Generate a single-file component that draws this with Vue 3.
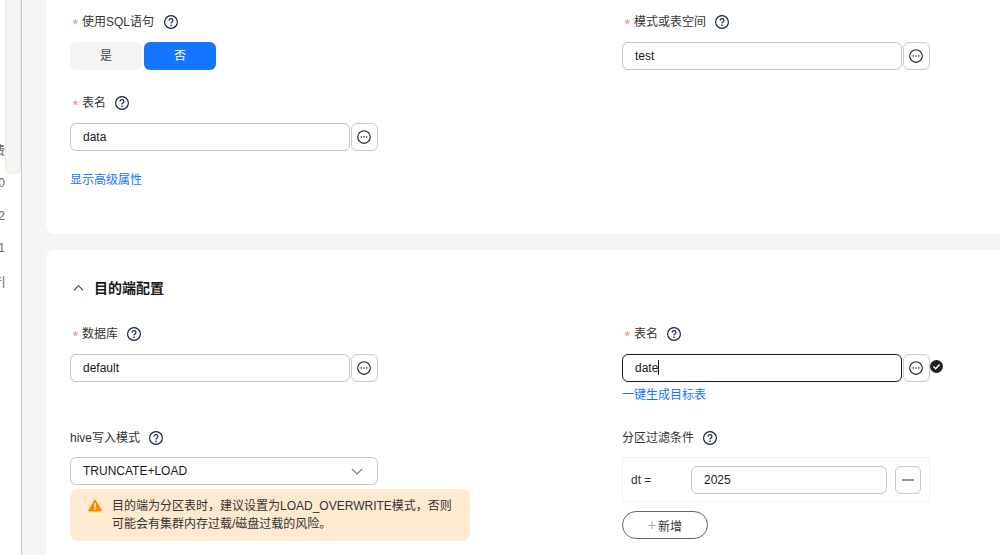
<script setup>
const sideItems = ['费', '20', '22', '21', '件|']
</script>

<template>
  <div class="page">
    <aside class="side">
      <div class="side-texts">
        <div v-for="t in sideItems" :key="t" class="side-item"><span>{{ t }}</span></div>
      </div>
      <div class="side-tab"></div>
    </aside>
    <main class="main">
      <section class="card card-top">
        <div class="row">
          <div class="field">
            <div class="label"><i class="star">*</i>使用SQL语句
              <svg class="help wide" viewBox="0 0 14 14"><circle cx="7" cy="7" r="6.4" /><path d="M5.1 5.5a1.9 1.9 0 1 1 2.9 1.6c-.7.4-1 .8-1 1.5" /><circle class="dot" cx="7" cy="10.4" r=".8" /></svg>
            </div>
            <div class="toggle">
              <div class="opt">是</div>
              <div class="opt on">否</div>
            </div>
          </div>
          <div class="field">
            <div class="label"><i class="star">*</i>模式或表空间
              <svg class="help" viewBox="0 0 14 14"><circle cx="7" cy="7" r="6.4" /><path d="M5.1 5.5a1.9 1.9 0 1 1 2.9 1.6c-.7.4-1 .8-1 1.5" /><circle class="dot" cx="7" cy="10.4" r=".8" /></svg>
            </div>
            <div class="combo">
              <div class="input">test</div>
              <div class="more"><svg viewBox="0 0 14 14"><circle cx="7" cy="7" r="6.3" /><circle class="dot" cx="4.4" cy="7" r=".8" /><circle class="dot" cx="7" cy="7" r=".8" /><circle class="dot" cx="9.6" cy="7" r=".8" /></svg></div>
            </div>
          </div>
        </div>
        <div class="row row-second">
          <div class="field">
            <div class="label"><i class="star">*</i>表名
              <svg class="help" viewBox="0 0 14 14"><circle cx="7" cy="7" r="6.4" /><path d="M5.1 5.5a1.9 1.9 0 1 1 2.9 1.6c-.7.4-1 .8-1 1.5" /><circle class="dot" cx="7" cy="10.4" r=".8" /></svg>
            </div>
            <div class="combo">
              <div class="input">data</div>
              <div class="more"><svg viewBox="0 0 14 14"><circle cx="7" cy="7" r="6.3" /><circle class="dot" cx="4.4" cy="7" r=".8" /><circle class="dot" cx="7" cy="7" r=".8" /><circle class="dot" cx="9.6" cy="7" r=".8" /></svg></div>
            </div>
            <a class="link adv">显示高级属性</a>
          </div>
        </div>
      </section>

      <section class="card card-bottom">
        <h3 class="head">
          <svg class="up" viewBox="0 0 12 8"><path d="M1 6.5 6 1.5l5 5" /></svg>
          目的端配置
        </h3>
        <div class="row">
          <div class="field">
            <div class="label"><i class="star">*</i>数据库
              <svg class="help" viewBox="0 0 14 14"><circle cx="7" cy="7" r="6.4" /><path d="M5.1 5.5a1.9 1.9 0 1 1 2.9 1.6c-.7.4-1 .8-1 1.5" /><circle class="dot" cx="7" cy="10.4" r=".8" /></svg>
            </div>
            <div class="combo">
              <div class="input">default</div>
              <div class="more"><svg viewBox="0 0 14 14"><circle cx="7" cy="7" r="6.3" /><circle class="dot" cx="4.4" cy="7" r=".8" /><circle class="dot" cx="7" cy="7" r=".8" /><circle class="dot" cx="9.6" cy="7" r=".8" /></svg></div>
            </div>
          </div>
          <div class="field">
            <div class="label"><i class="star">*</i>表名
              <svg class="help" viewBox="0 0 14 14"><circle cx="7" cy="7" r="6.4" /><path d="M5.1 5.5a1.9 1.9 0 1 1 2.9 1.6c-.7.4-1 .8-1 1.5" /><circle class="dot" cx="7" cy="10.4" r=".8" /></svg>
            </div>
            <div class="combo">
              <div class="input focus">date<span class="caret"></span></div>
              <div class="more"><svg viewBox="0 0 14 14"><circle cx="7" cy="7" r="6.3" /><circle class="dot" cx="4.4" cy="7" r=".8" /><circle class="dot" cx="7" cy="7" r=".8" /><circle class="dot" cx="9.6" cy="7" r=".8" /></svg></div>
              <svg class="ok" viewBox="0 0 12 12"><circle cx="6" cy="6" r="6" /><path d="M3.2 6.1 5.2 8l3.6-3.8" /></svg>
            </div>
            <a class="link gen">一键生成目标表</a>
          </div>
        </div>
        <div class="row row-third">
          <div class="field">
            <div class="label plain">hive写入模式
              <svg class="help" viewBox="0 0 14 14"><circle cx="7" cy="7" r="6.4" /><path d="M5.1 5.5a1.9 1.9 0 1 1 2.9 1.6c-.7.4-1 .8-1 1.5" /><circle class="dot" cx="7" cy="10.4" r=".8" /></svg>
            </div>
            <div class="select">
              <span>TRUNCATE+LOAD</span>
              <svg class="chev" viewBox="0 0 12 7"><path d="M.8.8 6 6l5.2-5.2" /></svg>
            </div>
            <div class="warn">
              <svg class="tri" viewBox="0 0 16 14"><path class="tri-bg" d="M8 .4c.4 0 .7.2.9.5l6.8 11.4c.4.7-.1 1.5-.9 1.5H1.2c-.8 0-1.3-.8-.9-1.5L7.1.9C7.3.6 7.6.4 8 .4z" /><rect class="tri-w" x="7.2" y="4.4" width="1.6" height="5" /><rect class="tri-w" x="7.2" y="10.2" width="1.6" height="1.6" /></svg>
              <p>目的端为分区表时，建议设置为LOAD_OVERWRITE模式，否则可能会有集群内存过载/磁盘过载的风险。</p>
            </div>
          </div>
          <div class="field">
            <div class="label plain">分区过滤条件
              <svg class="help" viewBox="0 0 14 14"><circle cx="7" cy="7" r="6.4" /><path d="M5.1 5.5a1.9 1.9 0 1 1 2.9 1.6c-.7.4-1 .8-1 1.5" /><circle class="dot" cx="7" cy="10.4" r=".8" /></svg>
            </div>
            <div class="part">
              <span class="part-key">dt =</span>
              <div class="input part-input">2025</div>
              <div class="minus"><span></span></div>
            </div>
            <div class="add"><span class="plus">+</span>新增</div>
          </div>
        </div>
      </section>
    </main>
  </div>
</template>

<style>
html, body { margin: 0; background: #fff; overflow: hidden; }
</style>

<style scoped>
.page {
  display: flex;
  width: 1000px;
  height: 555px;
  overflow: hidden;
  font-family: "Liberation Sans", "Noto Sans CJK SC", sans-serif;
  font-size: 12px;
  color: #191919;
}
.side {
  flex: none;
  display: flex;
  width: 21px;
  height: 555px;
  border-right: 1px solid #c8c8c8;
  background: #fff;
}
.side-texts {
  width: 5px;
  padding-top: 134.5px;
  color: #666;
}
.side-item {
  display: flex;
  justify-content: flex-end;
  width: 5px;
  height: 32.5px;
  line-height: 32px;
  overflow: hidden;
}
.side-item span { flex: none; }
.side-tab {
  box-sizing: border-box;
  width: 16px;
  height: 174px;
  background: #f5f5f5;
  border: 1px solid #fde6cc;
  border-top: none;
  border-radius: 0 0 6px 6px;
}
.main {
  flex: 1;
  min-width: 0;
  padding-left: 24px;
  background: #f5f5f5;
}
.card {
  box-sizing: border-box;
  background: #fff;
  padding-left: 24px;
}
.card-top {
  height: 234px;
  padding-top: 12px;
  border-radius: 0 0 0 8px;
}
.card-bottom {
  height: 305px;
  margin-top: 16px;
  padding-top: 28px;
  border-radius: 8px 0 0 0;
}
.row {
  display: grid;
  grid-template-columns: 552px 1fr;
}
.row-second { margin-top: 23px; }
.row-third { margin-top: 24px; }
.field { display: flex; flex-direction: column; align-items: flex-start; }
.label {
  display: flex;
  align-items: center;
  height: 20px;
  margin-bottom: 10px;
  line-height: 20px;
  color: #333;
}
.label.plain { margin-bottom: 9px; }
.star {
  align-self: flex-start;
  box-sizing: border-box;
  width: 12px;
  height: 20px;
  padding: 2px 0 0 2.5px;
  color: #ff8080;
  font-style: normal;
  font-size: 15px;
  line-height: 20px;
  overflow: hidden;
}
.help {
  width: 14px;
  height: 14px;
  margin-left: 9px;
  fill: none;
  stroke: #14213d;
  stroke-width: 1.15;
}
.help.wide { margin-left: 10px; }
.help .dot { fill: #14213d; stroke: none; }
.toggle { display: flex; gap: 2px; }
.opt {
  width: 72px;
  height: 28px;
  line-height: 28px;
  text-align: center;
  background: #f5f5f5;
  border-radius: 6px;
  color: #444;
}
.opt.on { background: #1476ff; color: #fff; }
.combo { display: flex; align-items: flex-start; }
.input {
  box-sizing: border-box;
  width: 280px;
  height: 28px;
  padding: 0 12px;
  line-height: 26px;
  background: #fff;
  border: 1px solid #c2c2c2;
  border-radius: 6px;
  color: #191919;
}
.input.focus { border-color: #191919; }
.caret {
  display: inline-block;
  width: 1px;
  height: 15px;
  vertical-align: -3px;
  background: #191919;
}
.more {
  box-sizing: border-box;
  display: flex;
  align-items: center;
  justify-content: center;
  width: 27.5px;
  height: 28px;
  margin-left: 0.5px;
  border: 1px solid #c9c9c9;
  border-radius: 6px;
}
.more svg {
  width: 14px;
  height: 14px;
  fill: none;
  stroke: #1f1f1f;
  stroke-width: 1.15;
}
.more .dot { fill: #1f1f1f; stroke: none; }
.ok { width: 13px; height: 13px; margin: 6px 0 0 0; }
.ok circle { fill: #1f1f1f; }
.ok path { fill: none; stroke: #fff; stroke-width: 1.3; }
.link { color: #1476ff; line-height: 18px; cursor: pointer; }
.adv { margin-top: 20px; }
.gen { margin-top: 4px; }
.head {
  display: flex;
  align-items: center;
  height: 20px;
  margin: 0 0 26px;
  font-size: 14px;
  font-weight: 700;
  line-height: 20px;
  color: #191919;
}
.up {
  width: 11px;
  height: 8px;
  margin: 0 10px 0 3px;
  fill: none;
  stroke: #333;
  stroke-width: 1.1;
}
.select {
  box-sizing: border-box;
  display: flex;
  align-items: center;
  justify-content: space-between;
  width: 308px;
  height: 28px;
  padding: 0 14px 0 12px;
  border: 1px solid #c2c2c2;
  border-radius: 6px;
  color: #191919;
}
.chev {
  width: 12px;
  height: 7px;
  fill: none;
  stroke: #777;
  stroke-width: 1.1;
}
.warn {
  box-sizing: border-box;
  display: flex;
  width: 400px;
  height: 52px;
  margin-top: 4px;
  padding: 8px 16px 8px 18px;
  background: #ffe9d0;
  border-radius: 8px;
}
.warn p {
  margin: 0;
  line-height: 18px;
  color: #333;
}
.tri { flex: none; width: 14px; height: 13px; margin: 2px 10px 0 0; }
.tri-bg { fill: #ff8800; }
.tri-w { fill: #fff; }
.part {
  box-sizing: border-box;
  display: flex;
  align-items: center;
  width: 308px;
  height: 45px;
  padding: 0 8px;
  border: 1px solid #f0f0f0;
}
.part-key { width: 60px; flex: none; color: #333; }
.part-input { width: 196px; flex: none; }
.minus {
  box-sizing: border-box;
  display: flex;
  align-items: center;
  justify-content: center;
  width: 26px;
  height: 28px;
  margin-left: 8px;
  border: 1px solid #c9c9c9;
  border-radius: 6px;
}
.minus span {
  width: 12px;
  height: 2px;
  background: #999;
}
.add {
  box-sizing: border-box;
  display: flex;
  align-items: center;
  justify-content: center;
  width: 86px;
  height: 28px;
  margin-top: 9px;
  border: 1px solid #666;
  border-radius: 14px;
  color: #333;
}
.plus { color: #aaa; font-size: 14px; margin-right: 2px; }
</style>
